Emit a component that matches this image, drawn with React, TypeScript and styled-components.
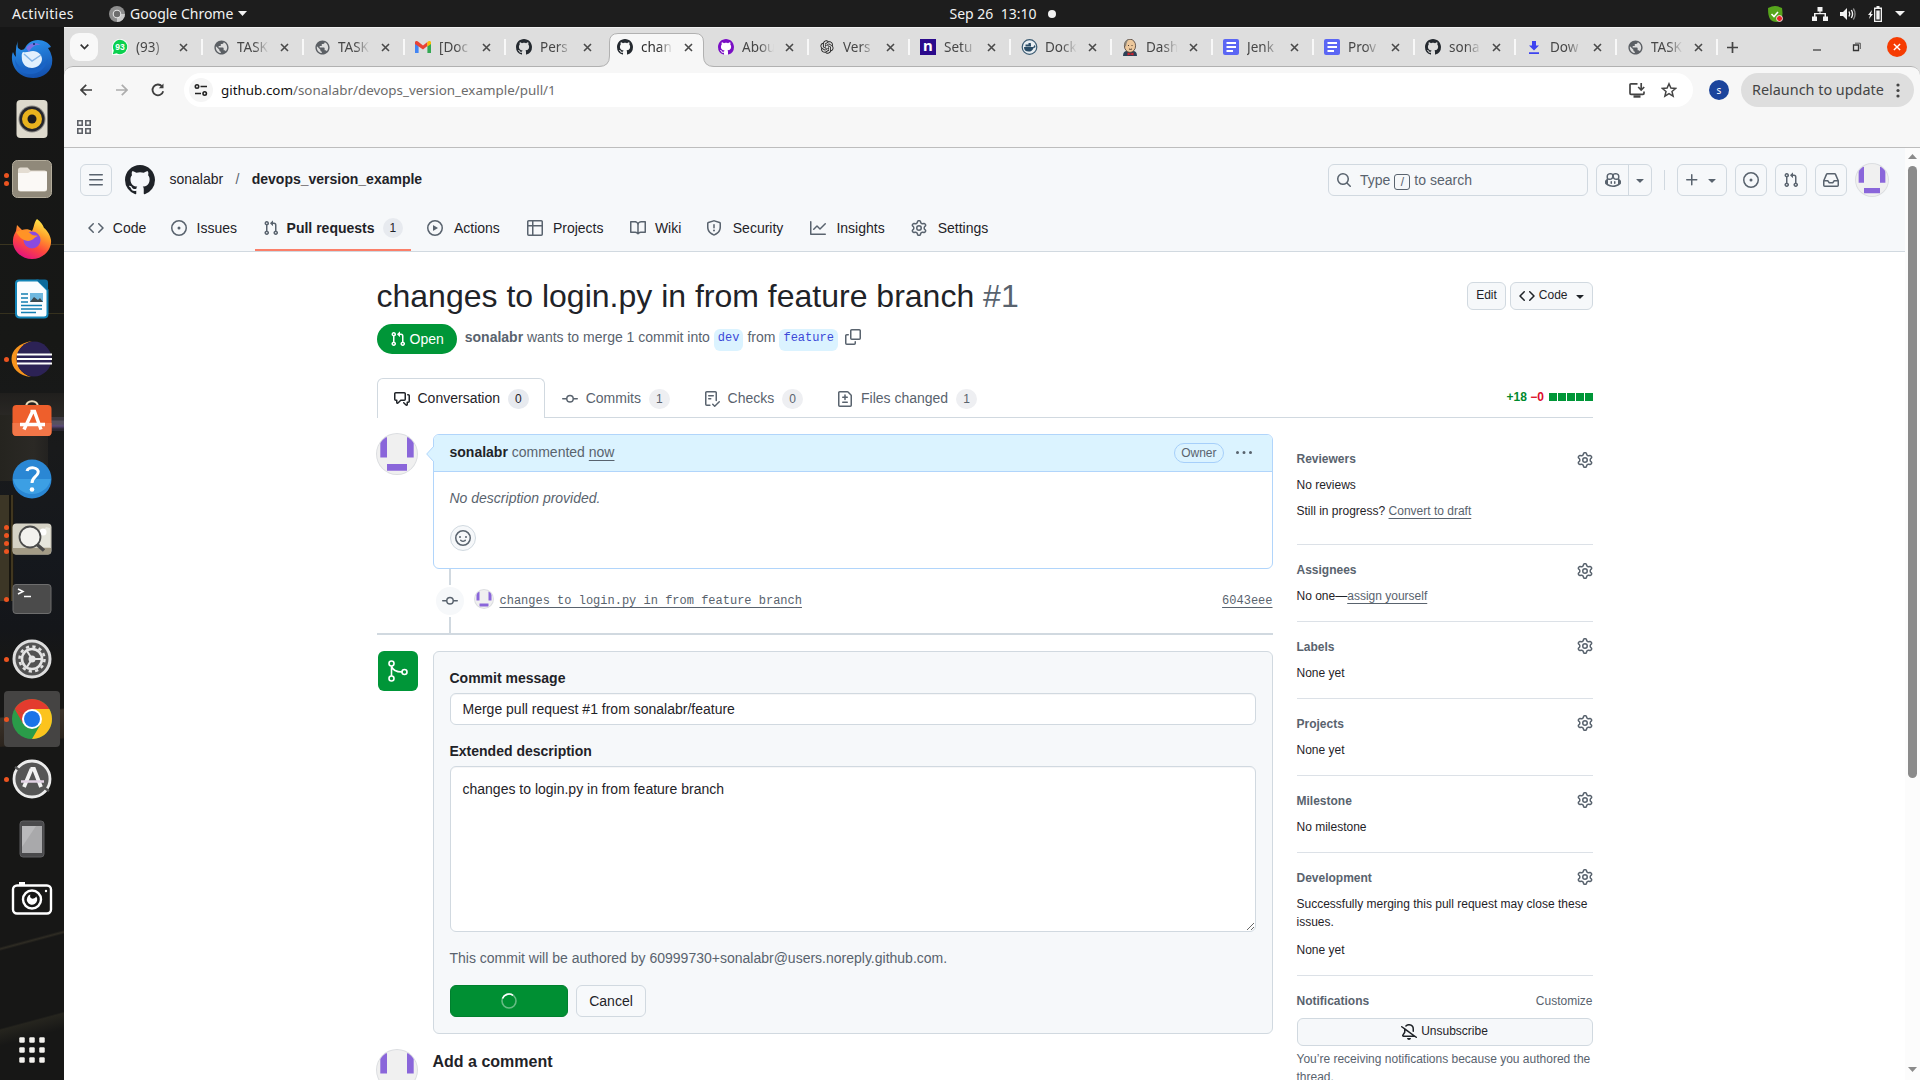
import React from "react";
import styled, { createGlobalStyle, css } from "styled-components";
import { RiOpenaiFill } from "react-icons/ri";
import { MdPublic } from "react-icons/md";

const sans = `"Liberation Sans", Arial, sans-serif`;
const mono = `"Liberation Mono", monospace`;
const ui = `"Noto Sans", "Open Sans", sans-serif`;

const c = {
  fg: "#1f2328",
  muted: "#59636e",
  border: "#d1d9e0",
  canvas: "#f6f8fa",
  green: "#009638",
  blueBg: "#dbf3ff",
  blueBorder: "#b1d5fb",
  link: "#3c49d8",
};

const GlobalStyle = createGlobalStyle`
  *, *::before, *::after { box-sizing: border-box; }
  html, body { margin: 0; padding: 0; overflow: hidden; }
  body { font-family: ${sans}; font-size: 14px; line-height: 1.5; color: ${c.fg}; }
  h1, h2, p { margin: 0; font-weight: 400; }
  svg { display: block; flex: none; }
`;

/* ---------- octicons (16px grid) ---------- */

const paths: Record<string, string> = {
  bars: "M1 2.75A.75.75 0 0 1 1.75 2h12.5a.75.75 0 0 1 0 1.5H1.75A.75.75 0 0 1 1 2.75Zm0 5A.75.75 0 0 1 1.75 7h12.5a.75.75 0 0 1 0 1.5H1.75A.75.75 0 0 1 1 7.75ZM1.75 12h12.5a.75.75 0 0 1 0 1.5H1.75a.75.75 0 0 1 0-1.5Z",
  github: "M8 0c4.42 0 8 3.58 8 8a8.013 8.013 0 0 1-5.45 7.59c-.4.08-.55-.17-.55-.38 0-.27.01-1.13.01-2.2 0-.75-.25-1.23-.54-1.48 1.78-.2 3.65-.88 3.65-3.95 0-.88-.31-1.59-.82-2.15.08-.2.36-1.02-.08-2.12 0 0-.67-.22-2.2.82-.64-.18-1.32-.27-2-.27-.68 0-1.36.09-2 .27-1.53-1.03-2.2-.82-2.2-.82-.44 1.1-.16 1.92-.08 2.12-.51.56-.82 1.28-.82 2.15 0 3.06 1.86 3.75 3.64 3.95-.23.2-.44.55-.51 1.07-.46.21-1.61.55-2.33-.66-.15-.24-.6-.83-1.23-.82-.67.01-.27.38.01.53.34.19.73.9.82 1.13.16.45.68 1.31 2.69.94 0 .67.01 1.3.01 1.49 0 .21-.15.45-.55.38A7.995 7.995 0 0 1 0 8c0-4.42 3.58-8 8-8Z",
  code: "m11.28 3.22 4.25 4.25a.75.75 0 0 1 0 1.06l-4.25 4.25a.749.749 0 0 1-1.275-.326.749.749 0 0 1 .215-.734L13.94 8l-3.72-3.72a.749.749 0 0 1 .326-1.275.749.749 0 0 1 .734.215Zm-6.56 0a.751.751 0 0 1 1.042.018.751.751 0 0 1 .018 1.042L2.06 8l3.72 3.72a.749.749 0 0 1-.326 1.275.749.749 0 0 1-.734-.215L.47 8.53a.75.75 0 0 1 0-1.06Z",
  issue: "M8 9.5a1.5 1.5 0 1 0 0-3 1.5 1.5 0 0 0 0 3ZM8 0a8 8 0 1 1 0 16A8 8 0 0 1 8 0ZM1.5 8a6.5 6.5 0 1 0 13 0 6.5 6.5 0 0 0-13 0Z",
  pr: "M1.5 3.25a2.25 2.25 0 1 1 3 2.122v5.256a2.251 2.251 0 1 1-1.5 0V5.372A2.25 2.25 0 0 1 1.5 3.25Zm5.677-.177L9.573.677A.25.25 0 0 1 10 .854V2.5h1A2.5 2.5 0 0 1 13.5 5v5.628a2.251 2.251 0 1 1-1.5 0V5a1 1 0 0 0-1-1h-1v1.646a.25.25 0 0 1-.427.177L7.177 3.427a.25.25 0 0 1 0-.354ZM3.75 2.5a.75.75 0 1 0 0 1.5.75.75 0 0 0 0-1.5Zm0 9.5a.75.75 0 1 0 0 1.5.75.75 0 0 0 0-1.5Zm8.25.75a.75.75 0 1 0 1.5 0 .75.75 0 0 0-1.5 0Z",
  play: "M8 0a8 8 0 1 1 0 16A8 8 0 0 1 8 0ZM1.5 8a6.5 6.5 0 1 0 13 0 6.5 6.5 0 0 0-13 0Zm4.879-2.773 4.264 2.559a.25.25 0 0 1 0 .428l-4.264 2.559A.25.25 0 0 1 6 10.559V5.442a.25.25 0 0 1 .379-.215Z",
  table: "M0 1.75C0 .784.784 0 1.75 0h12.5C15.216 0 16 .784 16 1.75v12.5A1.75 1.75 0 0 1 14.25 16H1.75A1.75 1.75 0 0 1 0 14.25ZM6.5 6.5v8h7.75a.25.25 0 0 0 .25-.25V6.5Zm8-1.5V1.75a.25.25 0 0 0-.25-.25H6.5V5Zm-13 1.5v7.75c0 .138.112.25.25.25H5v-8ZM5 5V1.5H1.75a.25.25 0 0 0-.25.25V5Z",
  book: "M0 1.75A.75.75 0 0 1 .75 1h4.253c1.227 0 2.317.59 3 1.501A3.743 3.743 0 0 1 11.006 1h4.245a.75.75 0 0 1 .75.75v10.5a.75.75 0 0 1-.75.75h-4.507a2.25 2.25 0 0 0-1.591.659l-.622.621a.75.75 0 0 1-1.06 0l-.622-.621A2.25 2.25 0 0 0 5.258 13H.75a.75.75 0 0 1-.75-.75Zm7.251 10.324.004-5.073-.002-2.253A2.25 2.25 0 0 0 5.003 2.5H1.5v9h3.757a3.75 3.75 0 0 1 1.994.574ZM8.755 4.75l-.004 7.322a3.752 3.752 0 0 1 1.992-.572H14.5v-9h-3.495a2.25 2.25 0 0 0-2.25 2.25Z",
  shield: "M7.467.133a1.748 1.748 0 0 1 1.066 0l5.25 1.68A1.75 1.75 0 0 1 15 3.48V7c0 1.566-.32 3.182-1.303 4.682-.983 1.498-2.585 2.813-5.032 3.855a1.697 1.697 0 0 1-1.33 0c-2.447-1.042-4.049-2.357-5.032-3.855C1.32 10.182 1 8.566 1 7V3.48a1.75 1.75 0 0 1 1.217-1.667Zm.61 1.429a.25.25 0 0 0-.153 0l-5.25 1.68a.25.25 0 0 0-.174.238V7c0 1.358.275 2.666 1.057 3.86.784 1.194 2.121 2.34 4.366 3.297a.196.196 0 0 0 .154 0c2.245-.956 3.582-2.104 4.366-3.298C13.225 9.666 13.5 8.36 13.5 7V3.48a.251.251 0 0 0-.174-.237l-5.25-1.68ZM8.75 4.75v3a.75.75 0 0 1-1.5 0v-3a.75.75 0 0 1 1.5 0ZM9 10.5a1 1 0 1 1-2 0 1 1 0 0 1 2 0Z",
  graph: "M1.5 1.75V13.5h13.75a.75.75 0 0 1 0 1.5H.75a.75.75 0 0 1-.75-.75V1.75a.75.75 0 0 1 1.5 0Zm14.28 2.53-5.25 5.25a.75.75 0 0 1-1.06 0L7 7.06 4.28 9.78a.751.751 0 0 1-1.042-.018.751.751 0 0 1-.018-1.042l3.25-3.25a.75.75 0 0 1 1.06 0L10 7.94l4.72-4.72a.751.751 0 0 1 1.042.018.751.751 0 0 1 .018 1.042Z",
  gear: "M8 0a8.2 8.2 0 0 1 .701.031C9.444.095 9.99.645 10.16 1.29l.288 1.107c.018.066.079.158.212.224.231.114.454.243.668.386.123.082.233.09.299.071l1.103-.303c.644-.176 1.392.021 1.82.63.27.385.506.792.704 1.218.315.675.111 1.422-.364 1.891l-.814.806c-.049.048-.098.147-.088.294.016.257.016.515 0 .772-.01.147.038.246.088.294l.814.806c.475.469.679 1.216.364 1.891a7.977 7.977 0 0 1-.704 1.217c-.428.61-1.176.807-1.82.63l-1.102-.302c-.067-.019-.177-.011-.3.071a5.909 5.909 0 0 1-.668.386c-.133.066-.194.158-.211.224l-.29 1.106c-.168.646-.715 1.196-1.458 1.26a8.006 8.006 0 0 1-1.402 0c-.743-.064-1.289-.614-1.458-1.26l-.289-1.106c-.018-.066-.079-.158-.212-.224a5.738 5.738 0 0 1-.668-.386c-.123-.082-.233-.09-.299-.071l-1.103.303c-.644.176-1.392-.021-1.82-.63a8.12 8.12 0 0 1-.704-1.218c-.315-.675-.111-1.422.363-1.891l.815-.806c.05-.048.098-.147.088-.294a6.214 6.214 0 0 1 0-.772c.01-.147-.038-.246-.088-.294l-.815-.806C.635 6.045.431 5.298.746 4.623a7.92 7.92 0 0 1 .704-1.217c.428-.61 1.176-.807 1.82-.63l1.102.302c.067.019.177.011.3-.071.214-.143.437-.272.668-.386.133-.066.194-.158.211-.224l.29-1.106C6.009.645 6.556.095 7.299.03 7.53.01 7.764 0 8 0Zm-.571 1.525c-.036.003-.108.036-.137.146l-.289 1.105c-.147.561-.549.967-.998 1.189-.173.086-.34.183-.5.29-.417.278-.97.423-1.529.27l-1.103-.303c-.109-.03-.175.016-.195.045-.22.312-.412.644-.573.99-.014.031-.021.11.059.19l.815.806c.411.406.562.957.53 1.456a4.709 4.709 0 0 0 0 .582c.032.499-.119 1.05-.53 1.456l-.815.806c-.081.08-.073.159-.059.19.162.346.353.677.573.989.02.03.085.076.195.046l1.102-.303c.56-.153 1.113-.008 1.53.27.161.107.328.204.501.29.447.222.85.629.997 1.189l.289 1.105c.029.109.101.143.137.146a6.6 6.6 0 0 0 1.142 0c.036-.003.108-.036.137-.146l.289-1.105c.147-.561.549-.967.998-1.189.173-.086.34-.183.5-.29.417-.278.97-.423 1.529-.27l1.103.303c.109.029.175-.016.195-.045.22-.313.411-.644.573-.99.014-.031.021-.11-.059-.19l-.815-.806c-.411-.406-.562-.957-.53-1.456a4.709 4.709 0 0 0 0-.582c-.032-.499.119-1.05.53-1.456l.815-.806c.081-.08.073-.159.059-.19a6.464 6.464 0 0 0-.573-.989c-.02-.03-.085-.076-.195-.046l-1.102.303c-.56.153-1.113.008-1.53-.27a4.44 4.44 0 0 0-.501-.29c-.447-.222-.85-.629-.997-1.189l-.289-1.105c-.029-.11-.101-.143-.137-.146a6.6 6.6 0 0 0-1.142 0ZM11 8a3 3 0 1 1-6 0 3 3 0 0 1 6 0ZM9.5 8a1.5 1.5 0 1 0-3.001.001A1.5 1.5 0 0 0 9.5 8Z",
  search: "M10.68 11.74a6 6 0 0 1-7.922-8.982 6 6 0 0 1 8.982 7.922l3.04 3.04a.749.749 0 0 1-.326 1.275.749.749 0 0 1-.734-.215ZM11.5 7a4.499 4.499 0 1 0-8.997 0A4.499 4.499 0 0 0 11.5 7Z",
  plus: "M7.75 2a.75.75 0 0 1 .75.75V7h4.25a.75.75 0 0 1 0 1.5H8.5v4.25a.75.75 0 0 1-1.5 0V8.5H2.75a.75.75 0 0 1 0-1.5H7V2.75A.75.75 0 0 1 7.75 2Z",
  down: "m4.427 7.427 3.396 3.396a.25.25 0 0 0 .354 0l3.396-3.396A.25.25 0 0 0 11.396 7H4.604a.25.25 0 0 0-.177.427Z",
  inbox: "M2.8 2.06A1.75 1.75 0 0 1 4.41 1h7.18c.7 0 1.333.417 1.61 1.06l2.74 6.395c.04.093.06.194.06.295v4.5A1.75 1.75 0 0 1 14.25 15H1.75A1.75 1.75 0 0 1 0 13.25v-4.5c0-.101.02-.202.06-.295Zm1.61.44a.25.25 0 0 0-.23.152L1.887 8H4.75a.75.75 0 0 1 .6.3L6.625 10h2.75l1.275-1.7a.75.75 0 0 1 .6-.3h2.863L11.82 2.652a.25.25 0 0 0-.23-.152Zm10.09 7h-2.875l-1.275 1.7a.75.75 0 0 1-.6.3h-3.5a.75.75 0 0 1-.6-.3L4.375 9.5H1.5v3.75c0 .138.112.25.25.25h12.5a.25.25 0 0 0 .25-.25Z",
  copilot: "M7.998 15.035c-4.562 0-7.873-2.914-7.998-3.749V9.338c.085-.628.677-1.686 1.588-2.065.013-.07.024-.143.036-.218.029-.183.06-.384.126-.612-.201-.508-.254-1.084-.254-1.656 0-.87.128-1.769.693-2.484.579-.733 1.494-1.124 2.724-1.261 1.206-.134 2.262.034 2.944.765.05.053.096.108.139.165.044-.057.094-.112.143-.165.682-.731 1.738-.899 2.944-.765 1.23.137 2.145.528 2.724 1.261.566.715.693 1.614.693 2.484 0 .572-.053 1.148-.254 1.656.066.228.098.429.126.612.012.076.024.148.037.218.924.385 1.522 1.471 1.591 2.095v1.872c0 .766-3.351 3.795-8.002 3.795Zm0-1.485c2.28 0 4.584-1.11 5.002-1.433V7.862l-.023-.116c-.49.21-1.075.291-1.727.291-1.146 0-2.059-.327-2.71-.991A3.222 3.222 0 0 1 8 6.303a3.24 3.24 0 0 1-.544.743c-.65.664-1.563.991-2.71.991-.652 0-1.236-.081-1.727-.291l-.023.116v4.255c.419.323 2.722 1.433 5.002 1.433ZM6.762 2.83c-.193-.206-.637-.413-1.682-.297-1.019.113-1.479.404-1.713.7-.247.312-.369.789-.369 1.554 0 .793.129 1.171.308 1.371.162.181.519.379 1.442.379.853 0 1.339-.235 1.638-.54.315-.322.527-.827.617-1.553.117-.935-.037-1.395-.241-1.614Zm4.155-.297c-1.044-.116-1.488.091-1.681.297-.204.219-.359.679-.242 1.614.091.726.303 1.231.618 1.553.299.305.784.54 1.638.54.922 0 1.28-.198 1.442-.379.179-.2.308-.578.308-1.371 0-.765-.123-1.242-.37-1.554-.233-.296-.693-.587-1.713-.7ZM6.25 9.037a.75.75 0 0 1 .75.75v1.501a.75.75 0 0 1-1.5 0V9.787a.75.75 0 0 1 .75-.75Zm4.25.75v1.501a.75.75 0 0 1-1.5 0V9.787a.75.75 0 0 1 1.5 0Z",
  copy: "M0 6.75C0 5.784.784 5 1.75 5h1.5a.75.75 0 0 1 0 1.5h-1.5a.25.25 0 0 0-.25.25v7.5c0 .138.112.25.25.25h7.5a.25.25 0 0 0 .25-.25v-1.5a.75.75 0 0 1 1.5 0v1.5A1.75 1.75 0 0 1 9.25 16h-7.5A1.75 1.75 0 0 1 0 14.25ZM5 1.75C5 .784 5.784 0 6.75 0h7.5C15.216 0 16 .784 16 1.75v7.5A1.75 1.75 0 0 1 14.25 11h-7.5A1.75 1.75 0 0 1 5 9.25Zm1.75-.25a.25.25 0 0 0-.25.25v7.5c0 .138.112.25.25.25h7.5a.25.25 0 0 0 .25-.25v-7.5a.25.25 0 0 0-.25-.25Z",
  discussion: "M1.75 1h8.5c.966 0 1.75.784 1.75 1.75v5.5A1.75 1.75 0 0 1 10.25 10H7.061l-2.574 2.573A1.458 1.458 0 0 1 2 11.543V10h-.25A1.75 1.75 0 0 1 0 8.25v-5.5C0 1.784.784 1 1.75 1ZM1.5 2.75v5.5c0 .138.112.25.25.25h1a.75.75 0 0 1 .75.75v2.19l2.72-2.72a.749.749 0 0 1 .53-.22h3.5a.25.25 0 0 0 .25-.25v-5.5a.25.25 0 0 0-.25-.25h-8.5a.25.25 0 0 0-.25.25Zm13 2a.25.25 0 0 0-.25-.25h-.5a.75.75 0 0 1 0-1.5h.5c.966 0 1.75.784 1.75 1.75v5.5A1.75 1.75 0 0 1 14.25 12H14v1.543a1.458 1.458 0 0 1-2.487 1.03L9.22 12.28a.749.749 0 0 1 .326-1.275.749.749 0 0 1 .734.215l2.22 2.22v-2.19a.75.75 0 0 1 .75-.75h1a.25.25 0 0 0 .25-.25Z",
  commit: "M11.93 8.5a4.002 4.002 0 0 1-7.86 0H.75a.75.75 0 0 1 0-1.5h3.32a4.002 4.002 0 0 1 7.86 0h3.32a.75.75 0 0 1 0 1.5Zm-1.43-.75a2.5 2.5 0 1 0-5 0 2.5 2.5 0 0 0 5 0Z",
  checklist: "M2.5 1.75v11.5c0 .138.112.25.25.25h3.17a.75.75 0 0 1 0 1.5H2.75A1.75 1.75 0 0 1 1 13.25V1.75C1 .784 1.784 0 2.75 0h8.5C12.216 0 13 .784 13 1.75v7.736a.75.75 0 0 1-1.5 0V1.75a.25.25 0 0 0-.25-.25h-8.5a.25.25 0 0 0-.25.25Zm13.274 9.537v-.001l-4.557 4.45a.75.75 0 0 1-1.055-.008l-1.943-1.95a.75.75 0 0 1 1.062-1.058l1.419 1.425 4.026-3.932a.75.75 0 1 1 1.048 1.074ZM4.75 4h4.5a.75.75 0 0 1 0 1.5h-4.5a.75.75 0 0 1 0-1.5ZM4 7.75A.75.75 0 0 1 4.75 7h2a.75.75 0 0 1 0 1.5h-2A.75.75 0 0 1 4 7.75Z",
  diff: "M1 1.75C1 .784 1.784 0 2.75 0h7.586c.464 0 .909.184 1.237.513l2.914 2.914c.329.328.513.773.513 1.237v9.586A1.75 1.75 0 0 1 13.25 16H2.75A1.75 1.75 0 0 1 1 14.25Zm1.75-.25a.25.25 0 0 0-.25.25v12.5c0 .138.112.25.25.25h10.5a.25.25 0 0 0 .25-.25V4.664a.25.25 0 0 0-.073-.177l-2.914-2.914a.25.25 0 0 0-.177-.073ZM8 3.25a.75.75 0 0 1 .75.75v1.5h1.5a.75.75 0 0 1 0 1.5h-1.5v1.5a.75.75 0 0 1-1.5 0V7h-1.5a.75.75 0 0 1 0-1.5h1.5V4A.75.75 0 0 1 8 3.25Zm-3 8a.75.75 0 0 1 .75-.75h4.5a.75.75 0 0 1 0 1.5h-4.5a.75.75 0 0 1-.75-.75Z",
  smiley: "M8 0a8 8 0 1 1 0 16A8 8 0 0 1 8 0ZM1.5 8a6.5 6.5 0 1 0 13 0 6.5 6.5 0 0 0-13 0Zm3.82 1.636a.75.75 0 0 1 1.038.175l.007.009c.103.118.22.222.35.31.264.178.683.37 1.285.37.602 0 1.02-.192 1.285-.371.13-.088.247-.192.35-.31l.007-.008a.75.75 0 0 1 1.222.87c-.2.28-.44.5-.73.69-.63.418-1.37.638-2.127.629-.946 0-1.652-.308-2.126-.63a3.331 3.331 0 0 1-.735-.687.75.75 0 0 1 .183-1.044ZM12 7a1 1 0 1 1-2 0 1 1 0 0 1 2 0ZM5 8a1 1 0 1 1 0-2 1 1 0 0 1 0 2Z",
  kebab: "M8 9a1.5 1.5 0 1 0 0-3 1.5 1.5 0 0 0 0 3ZM1.5 9a1.5 1.5 0 1 0 0-3 1.5 1.5 0 0 0 0 3Zm13 0a1.5 1.5 0 1 0 0-3 1.5 1.5 0 0 0 0 3Z",
  bellSlash: "m4.182 4.31.016.011 10.104 7.316.013.01 1.375.996a.75.75 0 1 1-.88 1.214L13.626 13H2.518a1.516 1.516 0 0 1-1.263-2.36l1.703-2.554A.255.255 0 0 0 3 7.947V5.305L.31 3.357a.75.75 0 1 1 .88-1.214Zm7.373 7.19L4.5 6.391v1.556c0 .346-.102.683-.294.97l-1.703 2.556a.017.017 0 0 0-.003.01c0 .005.002.009.005.012l.006.004.007.001ZM8 1.5c-.997 0-1.895.416-2.534 1.086A.75.75 0 1 1 4.38 1.55 5 5 0 0 1 13 5v2.373a.75.75 0 0 1-1.5 0V5A3.5 3.5 0 0 0 8 1.5ZM8 16a2 2 0 0 1-1.985-1.75c-.017-.137.097-.25.235-.25h3.5c.138 0 .252.113.235.25A2 2 0 0 1 8 16Z",
};

const Octicon = ({ name, size = 16, color = "currentColor" }: { name: string; size?: number; color?: string }) => (
  <svg width={size} height={size} viewBox="0 0 16 16" fill={color} fillRule="evenodd">
    <path d={paths[name]} />
  </svg>
);

/* ---------- desktop shell ---------- */

const Desktop = styled.div`
  display: flex;
  flex-direction: column;
  width: 1920px;
  height: 1080px;
  overflow: hidden;
  background: #fff;
`;

const TopBar = styled.header`
  flex: none;
  display: grid;
  grid-template-columns: 1fr auto 1fr;
  align-items: center;
  height: 27px;
  background: #1d1d1d;
  color: #f2f2f2;
  font-family: ${ui};
  font-size: 14px;
  line-height: 26px;
`;

const BarLeft = styled.div`
  display: flex;
  align-items: center;
  padding-left: 12px;
`;

const Activities = styled.span`
  width: 62px;
  letter-spacing: 0.35px;
`;

const AppMenu = styled.div`
  display: flex;
  align-items: center;
  gap: 5px;
  margin-left: 35px;
`;

const Clock = styled.div`
  display: flex;
  align-items: center;
  gap: 12px;
  padding-left: 86px;
  white-space: pre;
`;

const ClockDot = styled.i`
  width: 8px;
  height: 8px;
  border-radius: 50%;
  background: #f2f2f2;
`;

const Tray = styled.div`
  display: flex;
  align-items: center;
  justify-content: flex-end;
  gap: 12px;
  padding-right: 15px;
`;

const ShieldSlot = styled.span`
  margin-right: 17px;
`;

const Workspace = styled.div`
  flex: 1;
  display: flex;
  min-height: 0;
`;

const Dock = styled.nav`
  flex: none;
  display: flex;
  flex-direction: column;
  gap: 4px;
  width: 64px;
  padding: 4px 4px 2px;
  background:
    linear-gradient(165deg, transparent 0 46%, rgba(90, 82, 60, 0.35) 47%, transparent 48%) 0 820px / 64px 200px no-repeat,
    linear-gradient(165deg, transparent 0 46%, rgba(90, 86, 60, 0.22) 47%, transparent 56%) 0 920px / 64px 160px no-repeat,
    linear-gradient(172deg, transparent 20%, #3a3229 24%, #2b241d 80%, transparent 84%) 0 680px / 64px 40px no-repeat,
    linear-gradient(90deg, #3c3626 0 9px, #17150f 9px 11px, #41371f 11px 13px, #1b1813 13px) 0 468px / 14px 106px no-repeat,
    linear-gradient(90deg, #25241f, #2b2925 70%, #232220) 0 388px / 48px 66px no-repeat,
    linear-gradient(#3d3a41 0 3px, #57515f 4px 7px, #5a4a78 9px, #2b2733 12px) 0 390px / 64px 14px no-repeat,
    linear-gradient(#201f1d, #2a2825) 0 366px / 64px 24px no-repeat,
    linear-gradient(#3a3520, #3a3520) 0 217px / 64px 1px no-repeat,
    linear-gradient(#35311e, #35311e) 0 286px / 64px 1px no-repeat,
    linear-gradient(#161616 0, #171816 30%, #191a1b 40%, #15181d 50%, #14161a 57%, #171716 60%, #171716 100%);
`;

const DockItem = styled.div<{ $active?: boolean; $last?: boolean }>`
  flex: none;
  display: grid;
  grid-template-columns: 5px 46px 5px;
  align-items: center;
  width: 56px;
  height: 56px;
  border-radius: 4px;
  background: ${(p) => (p.$active ? "#454443" : "transparent")};
  ${(p) => p.$last && css`margin-top: auto;`}
`;

const DotColumn = styled.span`
  display: flex;
  flex-direction: column;
  align-items: center;
  gap: 3px;
`;

const RunDot = styled.i`
  width: 5px;
  height: 5px;
  border-radius: 50%;
  background: #ec5420;
`;

const DockIcon = styled.span`
  display: flex;
  justify-content: center;
`;

const art: Record<string, React.ReactNode> = {
  thunderbird: (
    <>
      <defs>
        <linearGradient id="tb" x1="0.3" y1="0" x2="0.6" y2="1">
          <stop offset="0" stopColor="#2b95f0" />
          <stop offset="1" stopColor="#1350ae" />
        </linearGradient>
      </defs>
      <path d="M7 2q-1 4 0 7l3 2q3 0 4-2c2-4 6-8 13-8 6 0 11 3 13 7l-3 1q3 4 4 9c2 13-7 21-19 21C8 39 0 28 1 17q0-2 1-4 1 3 3 5Q4 8 7 2z" fill="url(#tb)" />
      <path d="M4 20c2 7 8 11 14 11 8 0 14-4 19-11-2 9-9 15-18 15S4 29 4 20z" fill="#1a63c6" />
      <path d="M15 9c3-5 10-6 15-3-6-1-10 3-12 7z" fill="#7c70e4" />
      <path d="M12 13c-2 2-1 5-1 8 1 5 5 8 10 8s10-4 10-9c0-4-4-8-9-8-4 0-6 2-10 1z" fill="#e2f0fd" />
      <path d="M13 15l8 7 9-6" stroke="#86b6e8" strokeWidth="1.500" fill="none" />
      <circle cx="23" cy="5" r="1" fill="#0a2c66" />
    </>
  ),
  rhythmbox: (
    <>
      <rect x="5.500" y="1" width="31" height="38" rx="4" fill="#dedacd" />
      <circle cx="21" cy="20" r="13.500" fill="#8a8985" />
      <circle cx="21" cy="20" r="12.500" fill="#25262b" />
      <circle cx="21" cy="20" r="10" fill="#e9b31e" />
      <circle cx="21" cy="20" r="4.500" fill="#1b1b1e" />
    </>
  ),
  files: (
    <>
      <rect x="1.500" y="1.500" width="39" height="37" rx="5" fill="#90897a" stroke="#b4ad9c" />
      <path d="M7 11q0-2.500 2.500-2.500h7l3 3h14q2.500 0 2.500 2.500v16q0 2.500-2.500 2.500h-24q-2.500 0-2.500-2.500z" fill="#e4ddd2" />
      <path d="M7 14h10l3-1.500h16V29q0 3-3 3H10q-3 0-3-3z" fill="#fbf9f6" />
    </>
  ),
  firefox: (
    <>
      <defs>
        <linearGradient id="ff" x1="0.8" y1="0" x2="0.3" y2="1">
          <stop offset="0" stopColor="#fff44f" />
          <stop offset=".35" stopColor="#ffa02a" />
          <stop offset=".65" stopColor="#ff4a3c" />
          <stop offset="1" stopColor="#e21082" />
        </linearGradient>
      </defs>
      <path d="M26 0c4 3 6 6 7 9 2 1 6 6 7 12 1 10-8 19-19 19S1 31 2 21c0-4 2-7 3-9l1-6 5 5c3-1 7-1 10 1 2-3 2-9 5-12z" fill="url(#ff)" />
      <circle cx="21" cy="21" r="8.500" fill="#8a4ae0" />
      <path d="M5 13c5-3 12-2 15 2 2 2 5 1 7 2-4 1-5 5-10 5-7-1-9-5-12-9z" fill="#ff9326" />
    </>
  ),
  writer: (
    <>
      <path d="M8 1.500h19l9.500 9.500v24q0 3.500-3.500 3.500H9q-4 0-4-4V4.500q0-3 3-3z" fill="#fafdff" stroke="#1385b8" strokeWidth="2" />
      <path d="M25 .5h9q3 0 3 3v8z" fill="#0b6a9c" />
      <path d="M10 15h7M10 19h7M10 23h7M10 26.500h21M10 30h21M10 33.500h15" stroke="#137fb3" strokeWidth="1.600" />
      <rect x="19" y="14" width="13" height="9" fill="#6fb8df" />
      <path d="M19 23l4-5 4 3 2-2 3 4z" fill="#3c4a50" />
    </>
  ),
  eclipse: (
    <>
      <path d="M21 2C8 4 .5 11 .5 20S8 37 20 38C10 34 6 28 6 20S10 6 21 2z" fill="#f7941e" />
      <circle cx="23" cy="20" r="17.500" fill="#2c2255" />
      <path d="M6 15.500h35M6 20h35M6 24.500h35" stroke="#fff" strokeWidth="2" />
    </>
  ),
  software: (
    <>
      <path d="M15 8.500c-1-8.500 13-8.500 12 0" stroke="#ead9b8" strokeWidth="2" fill="none" />
      <rect x="1.500" y="6" width="39" height="31" rx="4" fill="#ee5f2c" />
      <path d="M1.500 24h39v9q0 4-4 4h-31q-4 0-4-4z" fill="#f27648" />
      <path d="M19.500 12.500h4l6.500 18M21.500 12.500L13 30.500M9 25.500h25" stroke="#fff" strokeWidth="3.400" fill="none" />
    </>
  ),
  help: (
    <>
      <circle cx="21" cy="20" r="19.500" fill="#2a87d4" />
      <path d="M2 20a19.500 19.500 0 0 0 38 0z" fill="#3c9fe4" />
      <path d="M16 12c1-5 13-4 11 2-1 4-6 4-6 10" stroke="#fff" strokeWidth="3" fill="none" />
      <circle cx="21" cy="30.500" r="2.300" fill="#fff" />
    </>
  ),
  viewer: (
    <>
      <rect x="1.500" y="4.500" width="39" height="31" rx="4" fill="#d5d2c5" />
      <path d="M2 29h38v3.500q0 3-3 3H5q-3 0-3-3z" fill="#a39b86" />
      <path d="M20 28l15-20 4 1v19z" fill="#e6e6dd" />
      <circle cx="32" cy="13" r="3.500" fill="#fff" />
      <path d="M26 25.500l7 6" stroke="#4a4a4a" strokeWidth="3.500" />
      <circle cx="19" cy="18" r="10.500" fill="#f7f7f5" fillOpacity=".85" stroke="#4b4b4b" strokeWidth="1.800" />
    </>
  ),
  terminal: (
    <>
      <rect x="2" y="5.500" width="38" height="29" rx="3" fill="#4b4b4b" stroke="#6d6d6d" />
      <path d="M7 10l5 2.500-5 2.500M13 17.500h7" stroke="#fff" strokeWidth="1.500" fill="none" />
    </>
  ),
  settings: (
    <>
      <circle cx="21" cy="20" r="18" fill="#525252" stroke="#dedede" strokeWidth="3" />
      <circle cx="21" cy="20" r="10" fill="none" stroke="#e4e4e4" strokeWidth="2.600" />
      <circle cx="21" cy="20" r="12.500" fill="none" stroke="#e4e4e4" strokeWidth="2.500" strokeDasharray="3.270 3.270" />
      <path d="M21 20L16 12M21 20l-5 8M21 20h9" stroke="#e4e4e4" strokeWidth="2" />
      <circle cx="21" cy="20" r="3.500" fill="#e4e4e4" />
    </>
  ),
  chrome: (
    <>
      <circle cx="21" cy="20" r="20" fill="#2a9c49" />
      <path d="M21 20L3.700 10A20 20 0 0 1 38.300 10z" fill="#e33b2e" />
      <path d="M21 10h17.300A20 20 0 0 1 21 40l8.700-15z" fill="#fcc31e" />
      <path d="M3.700 10L12.300 25 21 20z" fill="#e33b2e" />
      <circle cx="21" cy="20" r="10" fill="#fff" />
      <circle cx="21" cy="20" r="8" fill="#1b73e8" />
    </>
  ),
  updater: (
    <>
      <circle cx="21" cy="20" r="18" fill="#565656" stroke="#ececec" strokeWidth="2.800" />
      <path d="M4 8l6 4M32 28l6 4" stroke="#565656" strokeWidth="2.500" />
      <path d="M19.500 10h3.500l7 18M20.500 10l-7.500 18" stroke="#f3f3f3" strokeWidth="3.800" fill="none" />
      <path d="M10 22.500h23" stroke="#e2d2e4" strokeWidth="2.500" />
    </>
  ),
  phone: (
    <>
      <rect x="9" y="2" width="24" height="36" rx="3" fill="#4a4a4c" stroke="#5c5c5e" />
      <rect x="11" y="7" width="20" height="27" fill="#a9a9ab" />
      <path d="M11 7h14L11 28z" fill="#b9b9bb" />
    </>
  ),
  camera: (
    <>
      <rect x="2" y="6.500" width="38" height="28" rx="4" fill="none" stroke="#fff" strokeWidth="2.400" />
      <rect x="8" y="3" width="6" height="3" fill="#fff" />
      <circle cx="21" cy="20.500" r="9" fill="none" stroke="#fff" strokeWidth="2.400" />
      <path d="M25.300 17.500a5.200 5.200 0 1 1-6-1.900q-1 4 2.400 4.100 2.600-.4 3.600-2.200z" fill="#fff" />
      <circle cx="35" cy="12" r="1.200" fill="#fff" />
    </>
  ),
  apps: (
    <>
      {[11, 21, 31].map((x) => [10, 20, 30].map((y) => <rect key={`${x}-${y}`} x={x - 2.75} y={y - 2.75} width="5.500" height="5.500" rx="1.200" fill="#f4f2ee" />))}
    </>
  ),
};

const dockItems = [
  { icon: "thunderbird", dots: 0 },
  { icon: "rhythmbox", dots: 0 },
  { icon: "files", dots: 2 },
  { icon: "firefox", dots: 0 },
  { icon: "writer", dots: 0 },
  { icon: "eclipse", dots: 1 },
  { icon: "software", dots: 0 },
  { icon: "help", dots: 0 },
  { icon: "viewer", dots: 4 },
  { icon: "terminal", dots: 1 },
  { icon: "settings", dots: 1 },
  { icon: "chrome", dots: 1 },
  { icon: "updater", dots: 1 },
  { icon: "phone", dots: 0 },
  { icon: "camera", dots: 0 },
  { icon: "apps", dots: 0 },
];

const DockBar = () => (
  <Dock>
    {dockItems.map((d) => (
      <DockItem key={d.icon} $active={d.icon === "chrome"} $last={d.icon === "apps"}>
        <DotColumn>{Array.from({ length: d.dots }, (_, i) => <RunDot key={i} />)}</DotColumn>
        <DockIcon>
          <svg width="42" height="40" viewBox="0 0 42 40">{art[d.icon]}</svg>
        </DockIcon>
      </DockItem>
    ))}
  </Dock>
);

const SystemBar = () => (
  <TopBar>
    <BarLeft>
      <Activities>Activities</Activities>
      <AppMenu>
        <svg width="16" height="16" viewBox="0 0 16 16">
          <circle cx="8" cy="8" r="8" fill="#8d8d8d" />
          <path d="M8 8h8A8 8 0 0 1 8 16z" fill="#c9c9c9" />
          <circle cx="8" cy="8" r="4.300" fill="#e4e4e4" />
          <circle cx="8" cy="8" r="3.200" fill="#6d6d6d" />
        </svg>
        Google Chrome
        <svg width="9" height="5" viewBox="0 0 9 5"><path d="M0 0h9L4.500 5z" fill="#f2f2f2" /></svg>
      </AppMenu>
    </BarLeft>
    <Clock>
      {"Sep 26  13:10"}
      <ClockDot />
    </Clock>
    <Tray>
      <ShieldSlot>
        <svg width="16" height="16" viewBox="0 0 16 16">
          <path d="M1 2Q5 0 8 0t7 2q1 6 0 9t-5 5Q5 16 3 13T1 2z" fill="#57a51c" />
          <path d="M4.500 8l2.500 2.500 4-4.500" stroke="#fff" strokeWidth="1.600" fill="none" />
          <circle cx="12.500" cy="12.500" r="3" fill="#e5262b" stroke="#fff" strokeWidth=".8" />
        </svg>
      </ShieldSlot>
      <svg width="16" height="14" viewBox="0 0 16 14" fill="#f2f2f2">
        <path d="M5.500 0h5v4.500h-2V6H14v3.500h2V14h-5V9.500h1.500V7.200h-9V9.500H5V14H0V9.500h2V6h5.500V4.500h-2z" />
      </svg>
      <svg width="16" height="14" viewBox="0 0 16 14" fill="none" stroke="#f2f2f2" strokeWidth="1.400">
        <path d="M0 5h3l4-4v12L3 9H0z" fill="#f2f2f2" stroke="none" />
        <path d="M9 4.500q1.500 2.500 0 5M11.300 3q2.500 4 0 8" />
        <path d="M13.300 1.500q3.500 5.500 0 11" stroke="#8a8a8a" />
      </svg>
      <svg width="15" height="16" viewBox="0 0 15 16" fill="#f2f2f2">
        <path d="M4 4L0 9h2l-1 4 4-5H3z" />
        <path d="M8.500 0h3v1.500H14V16H6V1.500h2.500zM7.300 3v11.700h5.400V3z" fillRule="evenodd" />
        <rect x="8.300" y="4.500" width="3.400" height="9" />
      </svg>
      <svg width="10" height="5" viewBox="0 0 10 5"><path d="M0 0h10L5 5z" fill="#f2f2f2" /></svg>
    </Tray>
  </TopBar>
);

/* ---------- browser ---------- */

const Browser = styled.section`
  flex: 1;
  display: flex;
  flex-direction: column;
  min-width: 0;
  background: #dedede;
`;

const TabStrip = styled.div`
  flex: none;
  display: flex;
  height: 39px;
  padding: 5px 13px 0 6px;
  border-top: 1px solid #f0f0f0;
`;

const TabSearch = styled.div`
  display: grid;
  place-items: center;
  width: 28px;
  height: 28px;
  margin-right: 3px;
  border-radius: 9px;
  background: #f8f8f8;
`;

const Tab = styled.div<{ $active?: boolean; $bare?: boolean }>`
  position: relative;
  display: grid;
  grid-template-columns: 16px 34px 10px;
  column-gap: 8px;
  align-items: center;
  width: 101px;
  height: 28px;
  padding-left: 11px;
  font-family: ${ui};
  font-size: 13.5px;
  line-height: 20px;
  color: ${(p) => (p.$active ? "#2e2e2e" : "#474747")};
  &::after {
    content: "";
    position: absolute;
    right: -1px;
    top: 6px;
    width: 2px;
    height: 16px;
    background: ${(p) => (p.$active || p.$bare ? "transparent" : "#f8f8f8")};
  }
`;

const TabShape = styled.svg`
  position: absolute;
  left: -7px;
  top: 0;
  z-index: 1;
`;

const TabPart = styled.span`
  position: relative;
  z-index: 2;
  display: grid;
  place-items: center;
`;

const TabText = styled.span`
  position: relative;
  z-index: 2;
  overflow: hidden;
  white-space: nowrap;
  mask-image: linear-gradient(90deg, #000 50%, transparent 94%);
`;

const WindowControls = styled.div`
  display: flex;
  align-items: center;
  gap: 30px;
  height: 28px;
  margin-left: auto;
`;

const NewTab = styled.div`
  display: grid;
  place-items: center;
  width: 31px;
  height: 28px;
`;

const CloseButton = styled.div`
  display: grid;
  place-items: center;
  width: 20px;
  height: 20px;
  margin-left: -5px;
  border-radius: 50%;
  background: #f63c02;
`;

const Toolbar = styled.div`
  flex: none;
  height: 82px;
  border-top: 1px solid #b1b1b1;
  border-bottom: 1px solid #bdbdbd;
  border-radius: 9px 9px 0 0;
  background: #f7f7f7;
  font-family: ${ui};
`;

const AddressRow = styled.div`
  display: flex;
  align-items: center;
  height: 34px;
  margin-top: 6px;
  padding: 0 6px 0 14px;
`;

const NavButton = styled.div`
  display: grid;
  place-items: center;
  width: 16px;
  height: 16px;
  margin-right: 20px;
`;

const Omnibox = styled.div`
  display: flex;
  align-items: center;
  width: 1509px;
  height: 34px;
  margin-left: -2px;
  padding: 0 16px 0 5px;
  border-radius: 17px;
  background: #fff;
  font-size: 13.4px;
  color: #6b6b6b;
`;

const SiteInfo = styled.div`
  display: grid;
  place-items: center;
  width: 24px;
  height: 24px;
  margin-right: 8px;
  border-radius: 50%;
  background: #f5f5f5;
`;

const Host = styled.span`
  color: #111;
`;

const OmniActions = styled.div`
  display: flex;
  gap: 16px;
  margin-left: auto;
`;

const Profile = styled.div`
  display: grid;
  place-items: center;
  width: 20px;
  height: 20px;
  margin: 0 12px 0 16px;
  border-radius: 50%;
  background: #1b449c;
  color: #fff;
  font-size: 10px;
  line-height: 20px;
`;

const Relaunch = styled.div`
  display: flex;
  align-items: center;
  justify-content: space-between;
  width: 173px;
  height: 34px;
  padding: 0 14px 0 11px;
  border-radius: 17px;
  background: #dedede;
  color: #444;
  font-size: 14.4px;
  white-space: nowrap;
`;

const BookmarkRow = styled.div`
  padding: 13px 0 0 13px;
`;

const Favicon = ({ kind }: { kind: string }) => {
  switch (kind) {
    case "whatsapp":
      return (
        <svg width="16" height="16" viewBox="0 0 16 16">
          <path d="M0 8a8 8 0 1 1 8 8H0z" fill="#fff" />
          <path d="M8 .8a7.200 7.200 0 1 1-3.500 13.500L.8 15.200l1-3.700A7.200 7.200 0 0 1 8 .8z" fill="#0bd04f" />
          <text x="8" y="11" fontSize="8.500" fontWeight="700" textAnchor="middle" fill="#fff" fontFamily="Liberation Sans">93</text>
        </svg>
      );
    case "gmail":
      return (
        <svg width="16" height="12" viewBox="0 0 16 12">
          <path d="M0 1.500V12h3.600V5z" fill="#4285f4" />
          <path d="M16 1.500V12h-3.600V5z" fill="#34a853" />
          <path d="M0 1.500C0 0 2-.5 3.600 1L8 4.500 12.400 1v4L8 8.500 0 3z" fill="#ea4335" />
          <path d="M12.400 1C14-.5 16 0 16 1.500V3l-3.600 2.500z" fill="#fbbc04" />
        </svg>
      );
    case "github":
      return <Octicon name="github" color="#24292f" />;
    case "githubPurple":
      return (
        <svg width="16" height="16" viewBox="0 0 16 16">
          <circle cx="8" cy="8" r="7.800" fill="#fff" />
          <path d={paths.github} fill="#7a0fc4" />
        </svg>
      );
    case "openai":
      return <RiOpenaiFill size={16} color="#222" />;
    case "n":
      return (
        <svg width="16" height="16" viewBox="0 0 16 16">
          <rect width="16" height="16" fill="#2b0a8c" />
          <text x="8" y="12" fontSize="15" fontWeight="700" textAnchor="middle" fill="#fff" fontFamily="Noto Sans">n</text>
        </svg>
      );
    case "docker":
      return (
        <svg width="17" height="16" viewBox="0 0 16 16">
          <circle cx="8" cy="8" r="7.300" fill="#e8eef2" stroke="#3b5b72" strokeWidth="1.200" />
          <path d="M2.500 8h9c1 0 1-1.500 1.200-2 1 .8.800 1.400 1.500 1.700-.5 1-1.500 1-2 1-1 3-3 3.800-5 3.800C4 12.500 2.500 11 2.500 8zM5 5.600h4.500v2H4v-2zM7 4h2.300v1.500H7z" fill="#2a4c66" />
        </svg>
      );
    case "jenkins":
      return (
        <svg width="16" height="17" viewBox="0 0 16 17">
          <path d="M1 17q0-5 4-5h6q4 0 4 5z" fill="#2c4156" />
          <ellipse cx="8" cy="6.800" rx="5.600" ry="6.600" fill="#ecc79b" stroke="#4a3a30" strokeWidth=".8" />
          <path d="M2.600 6C1.800 2 5 0 8 .2 4.600 1.600 4.600 4 4 8z" fill="#8b8479" />
          <path d="M6 6.500h1M9.500 6.500h1M7 10q1.500.8 3 0" stroke="#3a2a22" strokeWidth=".9" fill="none" />
          <path d="M5.500 13.500l3 1.200 3-1.200v3l-3-1-3 1z" fill="#d4202c" />
        </svg>
      );
    case "docs":
      return (
        <svg width="16" height="16" viewBox="0 0 16 16">
          <rect width="16" height="16" rx="2" fill="#5b66f4" />
          <path d="M3.500 4h9.500M3.500 8H13M3.500 12h6.500" stroke="#fff" strokeWidth="1.800" />
        </svg>
      );
    case "download":
      return (
        <svg width="12" height="13" viewBox="0 0 12 13">
          <path d="M4 0h4v4.500h3L6 9.500 1 4.500h3zM1 11.300h10V13H1z" fill="#3d43f0" />
        </svg>
      );
    default:
      return <MdPublic size={17} color="#5b5f64" />;
  }
};

const tabs: [string, string][] = [
  ["whatsapp", "(93)"],
  ["globe", "TASK"],
  ["globe", "TASK"],
  ["gmail", "[Doc"],
  ["github", "Pers"],
  ["github", "chan"],
  ["githubPurple", "Abou"],
  ["openai", "Vers"],
  ["n", "Setu"],
  ["docker", "Dock"],
  ["jenkins", "Dash"],
  ["docs", "Jenk"],
  ["docs", "Prov"],
  ["github", "sona"],
  ["download", "Dow"],
  ["globe", "TASK"],
];

const activeTab = 5;

const Cross = ({ color = "#4a4a4a", size = 9 }: { color?: string; size?: number }) => (
  <svg width={size} height={size} viewBox="0 0 9 9">
    <path d="M1 1l7 7M8 1L1 8" stroke={color} strokeWidth="1.600" />
  </svg>
);

const Chrome = () => (
  <>
    <TabStrip>
      <TabSearch>
        <svg width="9" height="6" viewBox="0 0 9 6" fill="none" stroke="#333" strokeWidth="1.700"><path d="M.7.7l3.800 3.800L8.300.7" /></svg>
      </TabSearch>
      {tabs.map(([kind, label], i) => (
        <Tab key={i} $active={i === activeTab} $bare={i === activeTab - 1}>
          {i === activeTab && (
            <TabShape width="116" height="35" viewBox="0 0 116 35">
              <path d="M0 34.500V33.500q10.500 0 10.500-10.500V9q0-8.500 8.500-8.500h77q8.500 0 8.500 8.500v14q0 10.500 10.500 10.500V35H0z" fill="#f7f7f7" />
              <path d="M0 33.500q10.500 0 10.500-10.500V9q0-8.500 8.500-8.500h77q8.500 0 8.500 8.500v14q0 10.500 10.500 10.500" fill="none" stroke="#b1b1b1" />
            </TabShape>
          )}
          <TabPart><Favicon kind={kind} /></TabPart>
          <TabText>{label}</TabText>
          <TabPart><Cross /></TabPart>
        </Tab>
      ))}
      <NewTab>
        <svg width="11" height="11" viewBox="0 0 11 11"><path d="M5.500 0v11M0 5.500h11" stroke="#444" strokeWidth="1.700" /></svg>
      </NewTab>
      <WindowControls>
        <svg width="10" height="10" viewBox="0 0 10 10"><path d="M1 8h8" stroke="#333" strokeWidth="1.200" /></svg>
        <svg width="10" height="10" viewBox="0 0 10 10" fill="none" stroke="#333"><path d="M1.500 3h5v5.500h-5z" strokeWidth="1.300" /><path d="M3 1.200h5.300V7" strokeWidth=".8" /></svg>
        <CloseButton><Cross color="#fff" size={8} /></CloseButton>
      </WindowControls>
    </TabStrip>
    <Toolbar>
      <AddressRow>
        <NavButton>
          <svg width="12" height="12" viewBox="0 0 12 12" fill="none" stroke="#3f3f3f" strokeWidth="1.700"><path d="M12 6H1M6.200.8L1 6l5.200 5.200" /></svg>
        </NavButton>
        <NavButton>
          <svg width="12" height="12" viewBox="0 0 12 12" fill="none" stroke="#adadad" strokeWidth="1.700"><path d="M0 6h11M5.800.8L11 6l-5.200 5.200" /></svg>
        </NavButton>
        <NavButton>
          <svg width="14" height="14" viewBox="0 0 14 14" fill="none" stroke="#3f3f3f" strokeWidth="1.800"><path d="M12.200 8.200A5.400 5.400 0 1 1 11 3.300" /><path d="M12.500.5v4.700H7.800z" fill="#3f3f3f" stroke="none" /></svg>
        </NavButton>
        <Omnibox>
          <SiteInfo>
            <svg width="14" height="12" viewBox="0 0 14 12" fill="none" stroke="#222" strokeWidth="1.600">
              <circle cx="3" cy="2.500" r="1.700" /><path d="M6.500 2.500H13M1 9.500h6" /><circle cx="10.700" cy="9.500" r="1.700" />
            </svg>
          </SiteInfo>
          <span><Host>github.com</Host>/sonalabr/devops_version_example/pull/1</span>
          <OmniActions>
            <svg width="16" height="16" viewBox="0 0 16 16" fill="none" stroke="#444" strokeWidth="1.700">
              <path d="M8.500 1.800H2q-1 0-1 1v8.500q0 1 1 1h12q1 0 1-1V9.500M12.200 1v6.500M9.200 5l3 3 3-3" /><path d="M4.500 14.500h7" strokeWidth="2.400" />
            </svg>
            <svg width="16" height="16" viewBox="0 0 16 16" fill="none" stroke="#444" strokeWidth="1.500">
              <path d="M8 1.800l1.900 4.300 4.700.4-3.600 3 1.100 4.600L8 11.700l-4.100 2.400L5 9.500l-3.600-3 4.700-.4z" />
            </svg>
          </OmniActions>
        </Omnibox>
        <Profile>s</Profile>
        <Relaunch>
          Relaunch to update
          <svg width="4" height="15" viewBox="0 0 4 15" fill="#444"><circle cx="2" cy="2" r="1.600" /><circle cx="2" cy="7.500" r="1.600" /><circle cx="2" cy="13" r="1.600" /></svg>
        </Relaunch>
      </AddressRow>
      <BookmarkRow>
        <svg width="14" height="14" viewBox="0 0 14 14" fill="none" stroke="#5e6167" strokeWidth="1.600">
          <path d="M.8.800h4.400v4.400H.8zM8.800.800h4.400v4.400H8.800zM.8 8.800h4.400v4.400H.8zM8.800 8.800h4.400v4.400H8.800z" />
        </svg>
      </BookmarkRow>
    </Toolbar>
  </>
);

/* ---------- page ---------- */

const Viewport = styled.div`
  flex: 1;
  display: flex;
  min-height: 0;
  overflow: hidden;
  background: #fff;
`;

const Page = styled.div`
  width: 1841px;
  overflow: hidden;
`;

const ScrollTrack = styled.div`
  display: flex;
  flex-direction: column;
  align-items: center;
  width: 15px;
  padding: 6px 0 8px;
  background: #fcfcfc;
`;

const ScrollThumb = styled.div`
  width: 9px;
  height: 612px;
  margin: 7px 0 auto;
  border-radius: 5px;
  background: #8b8b8b;
`;

const SiteHeader = styled.header`
  height: 104px;
  background: ${c.canvas};
  border-bottom: 1px solid ${c.border};
`;

const HeaderTop = styled.div`
  display: flex;
  align-items: center;
  padding: 16px 17px 0 16px;
  height: 48px;
`;

const SquareButton = styled.div<{ $width?: number }>`
  display: flex;
  align-items: center;
  justify-content: center;
  gap: 4px;
  width: ${(p) => p.$width ?? 32}px;
  height: 32px;
  border: 1px solid ${c.border};
  border-radius: 6px;
  color: ${c.muted};
`;

const LogoSlot = styled.span`
  margin: 0 14.5px 0 13px;
`;

const Crumbs = styled.div`
  display: flex;
  align-items: center;
  margin-bottom: 2px;
  line-height: 21px;
`;

const Slash = styled.span`
  width: 28.5px;
  text-align: center;
  color: ${c.muted};
`;

const RepoName = styled.strong`
  font-weight: 700;
`;

const HeaderTools = styled.div`
  display: flex;
  align-items: center;
  gap: 8px;
  margin-left: auto;
`;

const SearchBox = styled.div`
  display: flex;
  align-items: center;
  width: 260px;
  height: 32px;
  padding-left: 7px;
  border: 1px solid ${c.border};
  border-radius: 6px;
  color: ${c.muted};
`;

const SearchText = styled.span`
  display: flex;
  align-items: center;
  gap: 4px;
  margin-left: 8px;
`;

const Key = styled.kbd`
  display: grid;
  place-items: center;
  width: 16px;
  height: 16px;
  margin-top: 4px;
  border: 1px solid ${c.muted};
  border-radius: 3px;
  font-family: ${sans};
  font-size: 12px;
  line-height: 14px;
`;

const SplitButton = styled.div`
  display: flex;
  width: 56px;
  height: 32px;
  border: 1px solid ${c.border};
  border-radius: 6px;
  color: ${c.muted};
`;

const SplitPart = styled.div<{ $divided?: boolean }>`
  flex: ${(p) => (p.$divided ? "0 0 23px" : "1")};
  display: grid;
  place-items: center;
  ${(p) => p.$divided && css`border-left: 1px solid ${c.border};`}
`;

const ToolDivider = styled.i`
  width: 1px;
  height: 20px;
  margin: 0 4px;
  background: ${c.border};
`;

const UserSlot = styled.span`
  margin-left: 1px;
`;

const RepoNav = styled.nav`
  display: flex;
  gap: 8px;
  height: 55px;
  padding: 0 16px;
`;

const RepoTab = styled.div<{ $active?: boolean }>`
  display: flex;
  align-items: center;
  gap: 8px;
  height: 55px;
  padding: 11px 8px 0;
  border-bottom: 2px solid ${(p) => (p.$active ? "#fb7f69" : "transparent")};
  font-weight: ${(p) => (p.$active ? 700 : 400)};
  color: ${c.fg};
  svg { color: ${c.muted}; }
`;

const RepoTabLabel = styled.span`
  display: grid;
  justify-items: center;
  line-height: 21px;
  &::after {
    content: attr(data-label);
    height: 0;
    overflow: hidden;
    visibility: hidden;
    font-weight: 700;
  }
`;

const Counter = styled.span<{ $muted?: boolean }>`
  min-width: 20px;
  padding: 0 7px;
  border-radius: 10px;
  background: ${(p) => (p.$muted ? "#eeeff2" : "#e7eaef")};
  color: ${(p) => (p.$muted ? c.muted : c.fg)};
  font-size: 12px;
  font-weight: 400;
  line-height: 20px;
  text-align: center;
`;

const AvatarFrame = styled.span<{ $size: number }>`
  flex: none;
  display: block;
  width: ${(p) => p.$size}px;
  height: ${(p) => p.$size}px;
  border-radius: 50%;
  overflow: hidden;
  background: #f0f0f0;
  box-shadow: 0 0 0 1px #dcdee1;
`;

const Avatar = ({ size }: { size: number }) => (
  <AvatarFrame $size={size}>
    <svg width={size} height={size} viewBox="0 0 40 40" fill="#8a66da">
      <path d="M3.300 3.300H10v20.100H3.300zM30 3.300h6.700v20.100H30zM10 30h20v6.700H10z" />
    </svg>
  </AvatarFrame>
);

const Main = styled.main`
  width: 1216px;
  margin: 0 auto;
  padding-top: 24px;
`;

const TitleRow = styled.div`
  display: flex;
  align-items: flex-start;
  justify-content: space-between;
  height: 40px;
`;

const Title = styled.h1`
  font-size: 32px;
  line-height: 40px;
`;

const Dim = styled.span`
  color: ${c.muted};
`;

const TitleActions = styled.div`
  display: flex;
  gap: 4px;
  margin-top: 6px;
`;

const SmallButton = styled.div<{ $wide?: boolean }>`
  display: flex;
  align-items: center;
  justify-content: center;
  gap: 4px;
  height: 28px;
  padding: 0 8px;
  border: 1px solid ${c.border};
  border-radius: 6px;
  background: ${c.canvas};
  color: ${c.fg};
  font-size: 12px;
  line-height: 24px;
  ${(p) => p.$wide && css`width: 100%;`}
`;

const ButtonText = styled.span`
  margin-top: -3px;
`;

const MenuCaret = styled.span`
  margin-right: -4px;
`;

const StatusRow = styled.div`
  display: flex;
  align-items: flex-start;
  height: 30px;
  margin-top: 8px;
  color: ${c.muted};
  line-height: 21px;
`;

const OpenBadge = styled.span`
  display: flex;
  align-items: center;
  gap: 4px;
  height: 30px;
  margin-right: 8px;
  padding: 0 13px;
  border-radius: 15px;
  background: ${c.green};
  color: #fff;
`;

const MergeText = styled.span`
  display: flex;
  align-items: flex-start;
  gap: 4px;
  margin-top: 3px;
`;

const Branch = styled.span`
  height: 22px;
  margin-top: 2px;
  padding: 0 4px;
  border-radius: 6px;
  background: ${c.blueBg};
  color: ${c.link};
  font-family: ${mono};
  font-size: 12px;
  line-height: 19px;
`;

const CopySlot = styled.span`
  margin: 2px 0 0 3px;
`;

const TabNav = styled.div`
  display: flex;
  align-items: flex-end;
  justify-content: space-between;
  height: 40px;
  margin-top: 24px;
  border-bottom: 1px solid ${c.border};
`;

const TabList = styled.div`
  display: flex;
  margin-bottom: -1px;
`;

const PrTab = styled.div<{ $active?: boolean }>`
  display: flex;
  align-items: center;
  gap: 8px;
  height: 40px;
  padding: 0 ${(p) => (p.$active ? 15 : 16)}px 0 16px;
  border: 1px solid ${(p) => (p.$active ? c.border : "transparent")};
  border-bottom: 0;
  border-radius: 6px 6px 0 0;
  background: ${(p) => (p.$active ? "#fff" : "transparent")};
  color: ${(p) => (p.$active ? c.fg : c.muted)};
`;

const DiffStat = styled.div`
  display: flex;
  align-items: center;
  gap: 3.5px;
  padding-bottom: 11px;
  font-size: 12px;
  font-weight: 700;
  line-height: 18px;
`;

const Added = styled.span`color: #008a2e;`;
const Removed = styled.span`color: #dc0d2c;`;
const Blocks = styled.span`
  display: flex;
  gap: 1px;
  margin-left: 1px;
`;
const Block = styled.i`
  width: 8px;
  height: 8px;
  background: ${c.green};
`;

const Columns = styled.div`
  display: grid;
  grid-template-columns: 896px 296px;
  column-gap: 24px;
`;

const Discussion = styled.div`
  padding-top: 16px;
`;

const Entry = styled.div<{ $top?: number }>`
  display: grid;
  grid-template-columns: 40px 840px;
  column-gap: 16px;
  align-items: start;
  margin-top: ${(p) => p.$top ?? 0}px;
`;

const CommentBox = styled.article`
  position: relative;
  height: 135px;
  border: 1px solid ${c.blueBorder};
  border-radius: 6px;
`;

const Caret = styled.svg`
  position: absolute;
  left: -8px;
  top: 11px;
`;

const CommentHead = styled.div`
  display: flex;
  align-items: center;
  height: 37px;
  padding: 0 20px 0 16px;
  border-bottom: 1px solid ${c.blueBorder};
  border-radius: 5px 5px 0 0;
  background: ${c.blueBg};
  color: ${c.muted};
`;

const Author = styled.strong`
  color: ${c.fg};
`;

const HeadText = styled.span`
  margin-top: -2px;
`;

const Underlined = styled.a`
  color: inherit;
  text-decoration: underline;
  text-underline-offset: 3px;
  text-decoration-skip-ink: none;
`;

const OwnerLabel = styled.span`
  height: 20px;
  margin: 0 12px 0 auto;
  padding: 0 6px;
  border: 1px solid #a6cffa;
  border-radius: 10px;
  font-size: 12px;
  line-height: 18px;
`;

const CommentBody = styled.div`
  padding: 16px;
  color: ${c.muted};
`;

const Description = styled.p`
  font-style: italic;
  line-height: 21px;
`;

const ReactionButton = styled.div`
  display: grid;
  place-items: center;
  width: 26px;
  height: 26px;
  margin-top: 16px;
  border: 1px solid ${c.border};
  border-radius: 50%;
  background: ${c.canvas};
`;

const Rail = styled.i`
  display: block;
  width: 2px;
  height: 16px;
  margin-left: 72px;
  background: ${c.border};
`;

const CommitRow = styled.div`
  display: flex;
  align-items: center;
  height: 32px;
  margin-left: 59px;
  color: ${c.muted};
  font-family: ${mono};
  font-size: 12px;
  line-height: 18px;
`;

const CommitBadge = styled.span`
  display: grid;
  place-items: center;
  width: 28px;
  height: 28px;
  margin-right: 11px;
  border-radius: 50%;
  background: ${c.canvas};
`;

const CommitTitle = styled(Underlined)`
  margin: 0 auto 0 7px;
`;

const Sha = styled(Underlined)``;

const AvatarSlot = styled.span`
  margin-top: -4px;
`;

const ThickRule = styled.hr`
  height: 2px;
  margin: 0;
  border: 0;
  background: ${c.border};
`;

const MergeIcon = styled.div`
  display: grid;
  place-items: center;
  width: 40px;
  height: 40px;
  margin-left: 1px;
  border-radius: 6px;
  background: ${c.green};
`;

const MergeBox = styled.form`
  display: flex;
  flex-direction: column;
  height: 383px;
  padding: 16px;
  border: 1px solid ${c.border};
  border-radius: 6px;
  background: ${c.canvas};
`;

const FieldLabel = styled.label<{ $spaced?: boolean }>`
  height: 21px;
  margin: ${(p) => (p.$spaced ? 16 : 0)}px 0 4px;
  font-weight: 700;
  line-height: 21px;
`;

const fieldStyle = css`
  width: 100%;
  margin: 0;
  border: 1px solid ${c.border};
  border-radius: 6px;
  background: #fff;
  color: ${c.fg};
  font-family: ${sans};
  font-size: 14px;
  line-height: 21px;
  outline: none;
  box-shadow: inset 0 1px 0 rgba(31, 35, 40, 0.04);
`;

const TextInput = styled.input`
  ${fieldStyle}
  height: 32px;
  padding: 0 12px;
`;

const TextArea = styled.textarea`
  ${fieldStyle}
  display: block;
  height: 166px;
  padding: 12px;
`;

const Note = styled.p`
  margin: 16px 0;
  color: ${c.muted};
  line-height: 21px;
`;

const ButtonRow = styled.div`
  display: flex;
  gap: 8px;
`;

const ConfirmButton = styled.div`
  display: grid;
  place-items: center;
  width: 118px;
  height: 32px;
  border: 1px solid #00802e;
  border-radius: 6px;
  background: #008f33;
`;

const CancelButton = styled.div`
  width: 70px;
  height: 32px;
  padding-left: 1px;
  border: 1px solid ${c.border};
  border-radius: 6px;
  background: #f7f9fb;
  line-height: 30px;
  text-align: center;
`;

const AddComment = styled.h2`
  font-size: 16px;
  font-weight: 700;
  line-height: 24px;
`;

const Sidebar = styled.aside`
  padding-top: 16px;
  font-size: 12px;
  line-height: 18px;
`;

const Section = styled.section<{ $bottom?: number; $last?: boolean }>`
  padding: 16px 0 ${(p) => p.$bottom ?? 16}px;
  ${(p) => !p.$last && css`border-bottom: 1px solid #dce1e7;`}
`;

const SectionHead = styled.div<{ $drop?: number }>`
  display: flex;
  align-items: flex-start;
  justify-content: space-between;
  height: 18px;
  margin-bottom: 8px;
  color: ${c.muted};
  svg { margin-top: ${(p) => p.$drop ?? 0}px; }
`;

const Line = styled.p<{ $top?: number }>`
  margin-top: ${(p) => p.$top ?? 0}px;
`;

const MutedLink = styled(Underlined)`
  color: ${c.muted};
`;

const Footnote = styled.p`
  margin-top: 4px;
  color: ${c.muted};
`;

const SideSection = ({ title, drop, bottom, children }: { title: string; drop?: number; bottom?: number; children: React.ReactNode }) => (
  <Section $bottom={bottom}>
    <SectionHead $drop={drop}>
      <strong>{title}</strong>
      <Octicon name="gear" />
    </SectionHead>
    {children}
  </Section>
);

const repoTabs: [string, string][] = [
  ["code", "Code"],
  ["issue", "Issues"],
  ["pr", "Pull requests"],
  ["play", "Actions"],
  ["table", "Projects"],
  ["book", "Wiki"],
  ["shield", "Security"],
  ["graph", "Insights"],
  ["gear", "Settings"],
];

const prTabs: [string, string, number][] = [
  ["discussion", "Conversation", 0],
  ["commit", "Commits", 1],
  ["checklist", "Checks", 0],
  ["diff", "Files changed", 1],
];

const GitHubHeader = () => (
  <SiteHeader>
    <HeaderTop>
      <SquareButton><Octicon name="bars" /></SquareButton>
      <LogoSlot><Octicon name="github" size={30} color="#1f2328" /></LogoSlot>
      <Crumbs>sonalabr<Slash>/</Slash><RepoName>devops_version_example</RepoName></Crumbs>
      <HeaderTools>
        <SearchBox>
          <Octicon name="search" />
          <SearchText>Type <Key>/</Key> to search</SearchText>
        </SearchBox>
        <SplitButton>
          <SplitPart><Octicon name="copilot" /></SplitPart>
          <SplitPart $divided><Octicon name="down" /></SplitPart>
        </SplitButton>
        <ToolDivider />
        <SquareButton $width={50}><Octicon name="plus" /><Octicon name="down" /></SquareButton>
        <SquareButton><Octicon name="issue" /></SquareButton>
        <SquareButton><Octicon name="pr" /></SquareButton>
        <SquareButton><Octicon name="inbox" /></SquareButton>
        <UserSlot><Avatar size={32} /></UserSlot>
      </HeaderTools>
    </HeaderTop>
    <RepoNav>
      {repoTabs.map(([icon, label]) => {
        const active = icon === "pr";
        return (
          <RepoTab key={icon} $active={active}>
            <Octicon name={icon} />
            <RepoTabLabel data-label={label}>{label}</RepoTabLabel>
            {active && <Counter>1</Counter>}
          </RepoTab>
        );
      })}
    </RepoNav>
  </SiteHeader>
);

const PullRequest = () => (
  <Main>
    <TitleRow>
      <Title>changes to login.py in from feature branch <Dim>#1</Dim></Title>
      <TitleActions>
        <SmallButton><ButtonText>Edit</ButtonText></SmallButton>
        <SmallButton>
          <Octicon name="code" />
          <ButtonText>Code</ButtonText>
          <MenuCaret><Octicon name="down" /></MenuCaret>
        </SmallButton>
      </TitleActions>
    </TitleRow>
    <StatusRow>
      <OpenBadge><Octicon name="pr" />Open</OpenBadge>
      <MergeText>
        <span><strong>sonalabr</strong> wants to merge 1 commit into</span>
        <Branch>dev</Branch>
        <span>from</span>
        <Branch>feature</Branch>
        <CopySlot><Octicon name="copy" /></CopySlot>
      </MergeText>
    </StatusRow>
    <TabNav>
      <TabList>
        {prTabs.map(([icon, label, count], i) => (
          <PrTab key={icon} $active={i === 0}>
            <Octicon name={icon} />
            {label}
            <Counter $muted={i > 0}>{count}</Counter>
          </PrTab>
        ))}
      </TabList>
      <DiffStat>
        <Added>+18</Added>
        <Removed>−0</Removed>
        <Blocks>{[0, 1, 2, 3, 4].map((n) => <Block key={n} />)}</Blocks>
      </DiffStat>
    </TabNav>
    <Columns>
      <Discussion>
        <Entry>
          <Avatar size={40} />
          <CommentBox>
            <Caret width="8" height="16" viewBox="0 0 8 16">
              <path d="M8 0L.7 8 8 16z" fill={c.blueBg} />
              <path d="M8 0L.7 8 8 16" fill="none" stroke={c.blueBorder} />
            </Caret>
            <CommentHead>
              <HeadText><Author>sonalabr</Author> commented <Underlined>now</Underlined></HeadText>
              <OwnerLabel>Owner</OwnerLabel>
              <Octicon name="kebab" />
            </CommentHead>
            <CommentBody>
              <Description>No description provided.</Description>
              <ReactionButton><Octicon name="smiley" /></ReactionButton>
            </CommentBody>
          </CommentBox>
        </Entry>
        <Rail />
        <CommitRow>
          <CommitBadge><Octicon name="commit" /></CommitBadge>
          <AvatarSlot><Avatar size={18} /></AvatarSlot>
          <CommitTitle>changes to login.py in from feature branch</CommitTitle>
          <Sha>6043eee</Sha>
        </CommitRow>
        <Rail />
        <ThickRule />
        <Entry $top={16}>
          <MergeIcon>
            <svg width="24" height="24" viewBox="0 0 24 24" fill="none" stroke="#fff" strokeWidth="1.600">
              <circle cx="5.500" cy="4.500" r="2.500" /><circle cx="5.500" cy="19.500" r="2.500" /><circle cx="18.500" cy="13" r="2.500" />
              <path d="M5.500 7v10M5.500 7q1.500 6 10.500 6" />
            </svg>
          </MergeIcon>
          <MergeBox>
            <FieldLabel>Commit message</FieldLabel>
            <TextInput readOnly value="Merge pull request #1 from sonalabr/feature" />
            <FieldLabel $spaced>Extended description</FieldLabel>
            <TextArea readOnly value="changes to login.py in from feature branch" />
            <Note>This commit will be authored by 60999730+sonalabr@users.noreply.github.com.</Note>
            <ButtonRow>
              <ConfirmButton>
                <svg width="16" height="16" viewBox="0 0 16 16" fill="none" stroke="#fff" strokeWidth="1.600">
                  <circle cx="8" cy="8" r="7" strokeOpacity=".4" />
                  <path d="M1.500 5.500A7 7 0 0 1 12 2.300" />
                </svg>
              </ConfirmButton>
              <CancelButton>Cancel</CancelButton>
            </ButtonRow>
          </MergeBox>
        </Entry>
        <Entry $top={16}>
          <Avatar size={40} />
          <AddComment>Add a comment</AddComment>
        </Entry>
      </Discussion>
      <Sidebar>
        <SideSection title="Reviewers" drop={2} bottom={24}>
          <Line>No reviews</Line>
          <Line $top={8}>Still in progress? <MutedLink>Convert to draft</MutedLink></Line>
        </SideSection>
        <SideSection title="Assignees" drop={2}>
          <Line>No one—<MutedLink>assign yourself</MutedLink></Line>
        </SideSection>
        <SideSection title="Labels"><Line>None yet</Line></SideSection>
        <SideSection title="Projects"><Line>None yet</Line></SideSection>
        <SideSection title="Milestone"><Line>No milestone</Line></SideSection>
        <SideSection title="Development">
          <Line>Successfully merging this pull request may close these issues.</Line>
          <Line $top={10}>None yet</Line>
        </SideSection>
        <Section $last>
          <SectionHead><strong>Notifications</strong><span>Customize</span></SectionHead>
          <SmallButton $wide><Octicon name="bellSlash" /><ButtonText>Unsubscribe</ButtonText></SmallButton>
          <Footnote>You’re receiving notifications because you authored the thread.</Footnote>
        </Section>
      </Sidebar>
    </Columns>
  </Main>
);

export default function App() {
  return (
    <Desktop>
      <GlobalStyle />
      <SystemBar />
      <Workspace>
        <DockBar />
        <Browser>
          <Chrome />
          <Viewport>
            <Page>
              <GitHubHeader />
              <PullRequest />
            </Page>
            <ScrollTrack>
              <svg width="9" height="5" viewBox="0 0 9 5"><path d="M0 5h9L4.500 0z" fill="#8b8b8b" /></svg>
              <ScrollThumb />
              <svg width="9" height="5" viewBox="0 0 9 5"><path d="M0 0h9L4.500 5z" fill="#8b8b8b" /></svg>
            </ScrollTrack>
          </Viewport>
        </Browser>
      </Workspace>
    </Desktop>
  );
}
